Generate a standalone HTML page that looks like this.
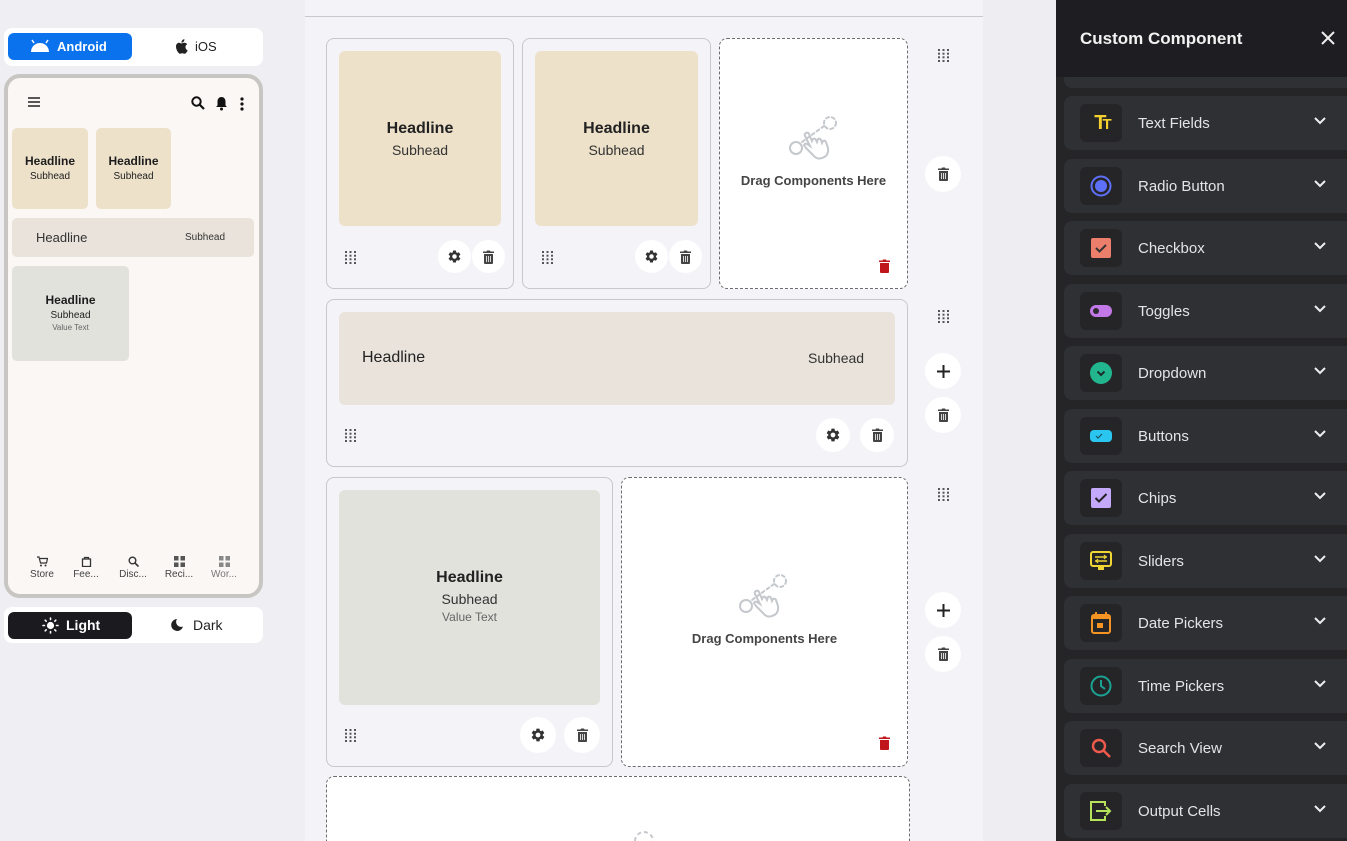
<!DOCTYPE html>
<html style="width:1347px;height:841px;overflow:hidden"><head><meta charset="utf-8">
<style>
*{margin:0;padding:0;box-sizing:border-box}
body{width:1347px;height:841px;overflow:hidden;position:relative;background:#efeef2;font-family:"Liberation Sans",sans-serif;color:#1d1d1d}
.a{position:absolute}
.c{text-align:center}
.dots{position:absolute;width:11px;height:13px}
.circ{position:absolute;width:34px;height:34px;border-radius:50%;background:#fff;display:flex;align-items:center;justify-content:center}
.card{position:absolute;border:1px solid #c6c8d0;border-radius:8px;background:#f4f3f8}
.drop{position:absolute;border:1px dashed #6b6b70;border-radius:8px;background:#fff}
.item{position:absolute;left:1064px;width:283px;height:54px;background:#2f3034;border-radius:8px 0 0 8px}
.ib{position:absolute;left:16px;top:8px;width:42px;height:38px;background:#252528;border-radius:6px;display:flex;align-items:center;justify-content:center}
.lbl{position:absolute;left:74px;top:19px;font-size:15px;color:#e4e4e6}
.chev{position:absolute;left:250px;top:21px}
</style></head><body>

<div class="a" style="left:305px;top:0;width:678px;height:841px;background:#f4f3f8"></div>
<div class="a" style="left:305px;top:16px;width:678px;height:1px;background:#c9c9ce"></div>
<div class="a" style="left:983px;top:0;width:73px;height:841px;background:#eeedf1"></div>

<div class="a" style="left:4px;top:28px;width:259px;height:38px;background:#fff;border-radius:8px"></div>
<div class="a" style="left:8px;top:33px;width:124px;height:27px;background:#0a72ec;border-radius:6px;color:#fff;font-weight:bold;font-size:13px;line-height:27px;padding-left:49px">Android</div>
<svg class="a" style="left:30px;top:39px" width="20" height="14" viewBox="0 0 20 14"><path d="M1 13 A9 9 0 0 1 19 13 Z" fill="#fff"/><path d="M4 4 L2 1 M16 4 L18 1" stroke="#fff" stroke-width="1.5"/></svg>
<svg class="a" style="left:175px;top:39px" width="13" height="15" viewBox="0 0 13 15"><path d="M10.5 8c0-2 1.6-2.7 1.7-2.8-1-1.4-2.4-1.5-2.9-1.5-1.2-.1-2.3.7-2.9.7s-1.5-.7-2.5-.7C2.6 3.8 1 5 1 7.5c0 3.5 2.7 7.3 4 7.3.8 0 1.3-.5 2.3-.5s1.3.5 2.3.5c1.6 0 3-3.3 3.1-3.4-.1 0-2.2-.9-2.2-3.4zM8.6 2.6C9.2 1.9 9.5 1 9.4.1 8.6.2 7.8.6 7.3 1.3 6.8 1.9 6.4 2.7 6.5 3.6c.8.1 1.6-.4 2.1-1z" fill="#222"/></svg>
<div class="a" style="left:195px;top:39px;font-size:13px;color:#222">iOS</div>

<div class="a" style="left:4px;top:74px;width:259px;height:524px;border:4px solid #c8c6c2;border-radius:16px;background:#faf7f4"></div>
<svg class="a" style="left:28px;top:97px" width="12" height="10"><path d="M0 1h12M0 5h12M0 9h12" stroke="#222" stroke-width="1.6"/></svg>
<svg class="a" style="left:191px;top:96px" width="14" height="14" viewBox="0 0 14 14"><circle cx="5.5" cy="5.5" r="4.2" fill="none" stroke="#111" stroke-width="2"/><path d="M8.5 8.5L13 13" stroke="#111" stroke-width="2.2"/></svg>
<svg class="a" style="left:215px;top:96px" width="13" height="15" viewBox="0 0 13 15"><path d="M6.5 1C4 1 2.5 3 2.5 5.5v4L1 11h11l-1.5-1.5v-4C10.5 3 9 1 6.5 1z" fill="#111"/><circle cx="6.5" cy="13" r="1.5" fill="#111"/></svg>
<svg class="a" style="left:240px;top:97px" width="4" height="14"><circle cx="2" cy="2" r="1.6" fill="#111"/><circle cx="2" cy="7" r="1.6" fill="#111"/><circle cx="2" cy="12" r="1.6" fill="#111"/></svg>

<div class="a c" style="left:12px;top:128px;width:76px;height:81px;background:#ede1ca;border-radius:5px;padding-top:26px"><div style="font-weight:bold;font-size:12px">Headline</div><div style="font-size:10px;margin-top:3px">Subhead</div></div>
<div class="a c" style="left:96px;top:128px;width:75px;height:81px;background:#ede1ca;border-radius:5px;padding-top:26px"><div style="font-weight:bold;font-size:12px">Headline</div><div style="font-size:10px;margin-top:3px">Subhead</div></div>
<div class="a" style="left:12px;top:218px;width:242px;height:39px;background:#e9e3db;border-radius:5px"></div>
<div class="a" style="left:36px;top:230px;font-size:13px;color:#333">Headline</div>
<div class="a" style="left:185px;top:232px;font-size:10px;color:#333">Subhead</div>
<div class="a c" style="left:12px;top:266px;width:117px;height:95px;background:#e1e2dc;border-radius:5px;padding-top:27px"><div style="font-weight:bold;font-size:12px">Headline</div><div style="font-size:10px;margin-top:3px">Subhead</div><div style="font-size:8px;color:#666;margin-top:2px">Value Text</div></div>

<div class="a c" style="left:24px;top:556px;width:36px;font-size:10px;color:#444">
<svg width="11" height="11" viewBox="0 0 11 11"><path d="M0 1h2l1.5 6h6l1-4.5H3" fill="none" stroke="#333" stroke-width="1.2"/><circle cx="4" cy="9.5" r="1" fill="#333"/><circle cx="8.5" cy="9.5" r="1" fill="#333"/></svg><div style="margin-top:-1px">Store</div></div>
<div class="a c" style="left:68px;top:556px;width:36px;font-size:10px;color:#444">
<svg width="11" height="11" viewBox="0 0 11 11"><rect x="1.5" y="3" width="8" height="7.5" fill="none" stroke="#333" stroke-width="1.3"/><path d="M3.5 3V1.5h4V3" fill="none" stroke="#333" stroke-width="1.2"/></svg><div style="margin-top:-1px">Fee...</div></div>
<div class="a c" style="left:115px;top:556px;width:36px;font-size:10px;color:#444">
<svg width="11" height="11" viewBox="0 0 11 11"><circle cx="4.5" cy="4.5" r="3.3" fill="none" stroke="#333" stroke-width="1.4"/><path d="M7 7l3.5 3.5" stroke="#333" stroke-width="1.6"/></svg><div style="margin-top:-1px">Disc...</div></div>
<div class="a c" style="left:161px;top:556px;width:36px;font-size:10px;color:#444">
<svg width="11" height="11" viewBox="0 0 11 11"><rect x="0" y="0" width="4.5" height="4.5" fill="#555"/><rect x="6.5" y="0" width="4.5" height="4.5" fill="#555"/><rect x="0" y="6.5" width="4.5" height="4.5" fill="#555"/><rect x="6.5" y="6.5" width="4.5" height="4.5" fill="#555"/></svg><div style="margin-top:-1px">Reci...</div></div>
<div class="a c" style="left:206px;top:556px;width:36px;font-size:10px;color:#777">
<svg width="11" height="11" viewBox="0 0 11 11"><rect x="0" y="0" width="4.5" height="4.5" fill="#888"/><rect x="6.5" y="0" width="4.5" height="4.5" fill="#888"/><rect x="0" y="6.5" width="4.5" height="4.5" fill="#888"/><rect x="6.5" y="6.5" width="4.5" height="4.5" fill="#888"/></svg><div style="margin-top:-1px">Wor...</div></div>

<div class="a" style="left:4px;top:607px;width:259px;height:36px;background:#fff;border-radius:8px"></div>
<div class="a" style="left:8px;top:612px;width:124px;height:27px;background:#1b1b1f;border-radius:6px;color:#fff;font-weight:bold;font-size:14px;line-height:27px;padding-left:58px">Light</div>
<svg class="a" style="left:42px;top:617px" width="17" height="17" viewBox="0 0 17 17"><circle cx="8.5" cy="8.5" r="3.6" fill="#fff"/><g stroke="#fff" stroke-width="1.6" stroke-linecap="round"><path d="M8.5 1v1.5M8.5 14.5V16M1 8.5h1.5M14.5 8.5H16M3.2 3.2l1 1M12.8 12.8l1 1M3.2 13.8l1-1M12.8 4.2l1-1"/></g></svg>
<svg class="a" style="left:170px;top:618px" width="14" height="14" viewBox="0 0 14 14"><path d="M7 1a6 6 0 1 0 6 7.5A5 5 0 0 1 7 1z" fill="#222"/></svg>
<div class="a" style="left:193px;top:617px;font-size:14px;color:#222">Dark</div>

<div class="card" style="left:326px;top:38px;width:188px;height:251px"></div>
<div class="a c" style="left:339px;top:51px;width:162px;height:175px;background:#ede1ca;border-radius:6px;padding-top:69px"><div style="font-weight:bold;font-size:16px;color:#222">Headline</div><div style="font-size:14px;margin-top:4px;color:#333">Subhead</div></div>
<div class="card" style="left:522px;top:38px;width:189px;height:251px"></div>
<div class="a c" style="left:535px;top:51px;width:163px;height:175px;background:#ede1ca;border-radius:6px;padding-top:69px"><div style="font-weight:bold;font-size:16px;color:#222">Headline</div><div style="font-size:14px;margin-top:4px;color:#333">Subhead</div></div>
<div class="drop" style="left:719px;top:38px;width:189px;height:251px"></div>
<div class="a c" style="left:719px;top:173px;width:189px;font-size:13px;font-weight:bold;color:#444">Drag Components Here</div>

<div class="card" style="left:326px;top:299px;width:582px;height:168px"></div>
<div class="a" style="left:339px;top:312px;width:556px;height:93px;background:#e9e3db;border-radius:6px"></div>
<div class="a" style="left:362px;top:349px;font-size:16px;color:#222">Headline</div>
<div class="a" style="left:808px;top:350px;font-size:14px;color:#333">Subhead</div>

<div class="card" style="left:326px;top:477px;width:287px;height:290px"></div>
<div class="a c" style="left:339px;top:490px;width:261px;height:215px;background:#e1e2dc;border-radius:6px;padding-top:79px"><div style="font-weight:bold;font-size:16px;color:#222">Headline</div><div style="font-size:14px;margin-top:4px;color:#333">Subhead</div><div style="font-size:12px;margin-top:3px;color:#666">Value Text</div></div>
<div class="drop" style="left:621px;top:477px;width:287px;height:290px"></div>
<div class="a c" style="left:621px;top:631px;width:287px;font-size:13px;font-weight:bold;color:#444">Drag Components Here</div>

<div class="drop" style="left:326px;top:776px;width:584px;height:65px;border-bottom:none;border-radius:8px 8px 0 0"></div>
<svg class="a" style="left:632px;top:829px" width="24" height="12"><path d="M3 12 A9 9 0 0 1 21 12" fill="none" stroke="#c5c8cc" stroke-width="2" stroke-dasharray="4 3"/></svg>

<svg class="a" style="left:786px;top:112px" width="56" height="52" viewBox="0 0 56 52"><g fill="none" stroke="#c5c8cc" stroke-width="2" stroke-linecap="round"><circle cx="44" cy="11" r="6" stroke-dasharray="3 3"/><path d="M38 14 L16 30" stroke-dasharray="3 3"/><circle cx="10" cy="36" r="6"/><path d="M20 36 L27 43 Q31 48 36 46 Q43 44 42 36 L40 30 Q39 28 37 29 L36 31 L35 28 Q34 26 32 27 L31 30 L30 28 Q29 26 27 27 L26 29 L23 22 Q22 20 20 21 Q18 22 19 24 L24 34 L21 32 Q19 31 18 33 Z"/></g></svg>
<svg class="a" style="left:736px;top:570px" width="56" height="52" viewBox="0 0 56 52"><g fill="none" stroke="#c5c8cc" stroke-width="2" stroke-linecap="round"><circle cx="44" cy="11" r="6" stroke-dasharray="3 3"/><path d="M38 14 L16 30" stroke-dasharray="3 3"/><circle cx="10" cy="36" r="6"/><path d="M20 36 L27 43 Q31 48 36 46 Q43 44 42 36 L40 30 Q39 28 37 29 L36 31 L35 28 Q34 26 32 27 L31 30 L30 28 Q29 26 27 27 L26 29 L23 22 Q22 20 20 21 Q18 22 19 24 L24 34 L21 32 Q19 31 18 33 Z"/></g></svg>

<svg class="a" style="left:879px;top:259px" width="11" height="14" viewBox="0 0 11 14"><path d="M1 4h9v9a1 1 0 0 1-1 1H2a1 1 0 0 1-1-1zM0 1.5h3.5L4 .5h3l.5 1H11V3H0z" fill="#c0161b"/></svg>
<svg class="a" style="left:879px;top:736px" width="11" height="14" viewBox="0 0 11 14"><path d="M1 4h9v9a1 1 0 0 1-1 1H2a1 1 0 0 1-1-1zM0 1.5h3.5L4 .5h3l.5 1H11V3H0z" fill="#c0161b"/></svg>

<svg class="dots" style="left:345px;top:251px" viewBox="0 0 11 13"><g fill="#555"><rect x="0" y="0" width="2" height="2"/><rect x="4.5" y="0" width="2" height="2"/><rect x="9" y="0" width="2" height="2"/><rect x="0" y="3.7" width="2" height="2"/><rect x="4.5" y="3.7" width="2" height="2"/><rect x="9" y="3.7" width="2" height="2"/><rect x="0" y="7.3" width="2" height="2"/><rect x="4.5" y="7.3" width="2" height="2"/><rect x="9" y="7.3" width="2" height="2"/><rect x="0" y="11" width="2" height="2"/><rect x="4.5" y="11" width="2" height="2"/><rect x="9" y="11" width="2" height="2"/></g></svg>
<svg class="dots" style="left:542px;top:251px" viewBox="0 0 11 13"><g fill="#555"><rect x="0" y="0" width="2" height="2"/><rect x="4.5" y="0" width="2" height="2"/><rect x="9" y="0" width="2" height="2"/><rect x="0" y="3.7" width="2" height="2"/><rect x="4.5" y="3.7" width="2" height="2"/><rect x="9" y="3.7" width="2" height="2"/><rect x="0" y="7.3" width="2" height="2"/><rect x="4.5" y="7.3" width="2" height="2"/><rect x="9" y="7.3" width="2" height="2"/><rect x="0" y="11" width="2" height="2"/><rect x="4.5" y="11" width="2" height="2"/><rect x="9" y="11" width="2" height="2"/></g></svg>
<svg class="dots" style="left:345px;top:429px" viewBox="0 0 11 13"><g fill="#555"><rect x="0" y="0" width="2" height="2"/><rect x="4.5" y="0" width="2" height="2"/><rect x="9" y="0" width="2" height="2"/><rect x="0" y="3.7" width="2" height="2"/><rect x="4.5" y="3.7" width="2" height="2"/><rect x="9" y="3.7" width="2" height="2"/><rect x="0" y="7.3" width="2" height="2"/><rect x="4.5" y="7.3" width="2" height="2"/><rect x="9" y="7.3" width="2" height="2"/><rect x="0" y="11" width="2" height="2"/><rect x="4.5" y="11" width="2" height="2"/><rect x="9" y="11" width="2" height="2"/></g></svg>
<svg class="dots" style="left:345px;top:729px" viewBox="0 0 11 13"><g fill="#555"><rect x="0" y="0" width="2" height="2"/><rect x="4.5" y="0" width="2" height="2"/><rect x="9" y="0" width="2" height="2"/><rect x="0" y="3.7" width="2" height="2"/><rect x="4.5" y="3.7" width="2" height="2"/><rect x="9" y="3.7" width="2" height="2"/><rect x="0" y="7.3" width="2" height="2"/><rect x="4.5" y="7.3" width="2" height="2"/><rect x="9" y="7.3" width="2" height="2"/><rect x="0" y="11" width="2" height="2"/><rect x="4.5" y="11" width="2" height="2"/><rect x="9" y="11" width="2" height="2"/></g></svg>
<svg class="dots" style="left:938px;top:49px" viewBox="0 0 11 13"><g fill="#555"><rect x="0" y="0" width="2" height="2"/><rect x="4.5" y="0" width="2" height="2"/><rect x="9" y="0" width="2" height="2"/><rect x="0" y="3.7" width="2" height="2"/><rect x="4.5" y="3.7" width="2" height="2"/><rect x="9" y="3.7" width="2" height="2"/><rect x="0" y="7.3" width="2" height="2"/><rect x="4.5" y="7.3" width="2" height="2"/><rect x="9" y="7.3" width="2" height="2"/><rect x="0" y="11" width="2" height="2"/><rect x="4.5" y="11" width="2" height="2"/><rect x="9" y="11" width="2" height="2"/></g></svg>
<svg class="dots" style="left:938px;top:310px" viewBox="0 0 11 13"><g fill="#555"><rect x="0" y="0" width="2" height="2"/><rect x="4.5" y="0" width="2" height="2"/><rect x="9" y="0" width="2" height="2"/><rect x="0" y="3.7" width="2" height="2"/><rect x="4.5" y="3.7" width="2" height="2"/><rect x="9" y="3.7" width="2" height="2"/><rect x="0" y="7.3" width="2" height="2"/><rect x="4.5" y="7.3" width="2" height="2"/><rect x="9" y="7.3" width="2" height="2"/><rect x="0" y="11" width="2" height="2"/><rect x="4.5" y="11" width="2" height="2"/><rect x="9" y="11" width="2" height="2"/></g></svg>
<svg class="dots" style="left:938px;top:488px" viewBox="0 0 11 13"><g fill="#555"><rect x="0" y="0" width="2" height="2"/><rect x="4.5" y="0" width="2" height="2"/><rect x="9" y="0" width="2" height="2"/><rect x="0" y="3.7" width="2" height="2"/><rect x="4.5" y="3.7" width="2" height="2"/><rect x="9" y="3.7" width="2" height="2"/><rect x="0" y="7.3" width="2" height="2"/><rect x="4.5" y="7.3" width="2" height="2"/><rect x="9" y="7.3" width="2" height="2"/><rect x="0" y="11" width="2" height="2"/><rect x="4.5" y="11" width="2" height="2"/><rect x="9" y="11" width="2" height="2"/></g></svg>

<div class="circ" style="left:438px;top:240px;width:33px;height:33px"><svg width="15" height="15" viewBox="0 0 24 24"><path fill="#333" d="M19.14 12.94c.04-.3.06-.61.06-.94 0-.32-.02-.64-.07-.94l2.03-1.58a.49.49 0 0 0 .12-.61l-1.92-3.32a.49.49 0 0 0-.59-.22l-2.39.96c-.5-.38-1.03-.7-1.62-.94l-.36-2.54a.48.48 0 0 0-.48-.41h-3.84c-.24 0-.43.17-.47.41l-.36 2.54c-.59.24-1.13.57-1.62.94l-2.39-.96a.49.49 0 0 0-.59.22L2.74 8.87c-.12.21-.08.47.12.61l2.03 1.58c-.05.3-.09.63-.09.94s.02.64.07.94l-2.03 1.58a.49.49 0 0 0-.12.61l1.92 3.32c.12.22.37.29.59.22l2.39-.96c.5.38 1.03.7 1.62.94l.36 2.54c.05.24.24.41.48.41h3.84c.24 0 .44-.17.47-.41l.36-2.54c.59-.24 1.13-.56 1.62-.94l2.39.96c.22.08.47 0 .59-.22l1.92-3.32c.12-.22.07-.47-.12-.61l-2.01-1.58zM12 15.6a3.6 3.6 0 1 1 0-7.2 3.6 3.6 0 0 1 0 7.2z"/></svg></div>
<div class="circ" style="left:635px;top:240px;width:33px;height:33px"><svg width="15" height="15" viewBox="0 0 24 24"><path fill="#333" d="M19.14 12.94c.04-.3.06-.61.06-.94 0-.32-.02-.64-.07-.94l2.03-1.58a.49.49 0 0 0 .12-.61l-1.92-3.32a.49.49 0 0 0-.59-.22l-2.39.96c-.5-.38-1.03-.7-1.62-.94l-.36-2.54a.48.48 0 0 0-.48-.41h-3.84c-.24 0-.43.17-.47.41l-.36 2.54c-.59.24-1.13.57-1.62.94l-2.39-.96a.49.49 0 0 0-.59.22L2.74 8.87c-.12.21-.08.47.12.61l2.03 1.58c-.05.3-.09.63-.09.94s.02.64.07.94l-2.03 1.58a.49.49 0 0 0-.12.61l1.92 3.32c.12.22.37.29.59.22l2.39-.96c.5.38 1.03.7 1.62.94l.36 2.54c.05.24.24.41.48.41h3.84c.24 0 .44-.17.47-.41l.36-2.54c.59-.24 1.13-.56 1.62-.94l2.39.96c.22.08.47 0 .59-.22l1.92-3.32c.12-.22.07-.47-.12-.61l-2.01-1.58zM12 15.6a3.6 3.6 0 1 1 0-7.2 3.6 3.6 0 0 1 0 7.2z"/></svg></div>
<div class="circ" style="left:816px;top:418px"><svg width="16" height="16" viewBox="0 0 24 24"><path fill="#333" d="M19.14 12.94c.04-.3.06-.61.06-.94 0-.32-.02-.64-.07-.94l2.03-1.58a.49.49 0 0 0 .12-.61l-1.92-3.32a.49.49 0 0 0-.59-.22l-2.39.96c-.5-.38-1.03-.7-1.62-.94l-.36-2.54a.48.48 0 0 0-.48-.41h-3.84c-.24 0-.43.17-.47.41l-.36 2.54c-.59.24-1.13.57-1.62.94l-2.39-.96a.49.49 0 0 0-.59.22L2.74 8.87c-.12.21-.08.47.12.61l2.03 1.58c-.05.3-.09.63-.09.94s.02.64.07.94l-2.03 1.58a.49.49 0 0 0-.12.61l1.92 3.32c.12.22.37.29.59.22l2.39-.96c.5.38 1.03.7 1.62.94l.36 2.54c.05.24.24.41.48.41h3.84c.24 0 .44-.17.47-.41l.36-2.54c.59-.24 1.13-.56 1.62-.94l2.39.96c.22.08.47 0 .59-.22l1.92-3.32c.12-.22.07-.47-.12-.61l-2.01-1.58zM12 15.6a3.6 3.6 0 1 1 0-7.2 3.6 3.6 0 0 1 0 7.2z"/></svg></div>
<div class="circ" style="left:520px;top:717px;width:36px;height:36px"><svg width="16" height="16" viewBox="0 0 24 24"><path fill="#333" d="M19.14 12.94c.04-.3.06-.61.06-.94 0-.32-.02-.64-.07-.94l2.03-1.58a.49.49 0 0 0 .12-.61l-1.92-3.32a.49.49 0 0 0-.59-.22l-2.39.96c-.5-.38-1.03-.7-1.62-.94l-.36-2.54a.48.48 0 0 0-.48-.41h-3.84c-.24 0-.43.17-.47.41l-.36 2.54c-.59.24-1.13.57-1.62.94l-2.39-.96a.49.49 0 0 0-.59.22L2.74 8.87c-.12.21-.08.47.12.61l2.03 1.58c-.05.3-.09.63-.09.94s.02.64.07.94l-2.03 1.58a.49.49 0 0 0-.12.61l1.92 3.32c.12.22.37.29.59.22l2.39-.96c.5.38 1.03.7 1.62.94l.36 2.54c.05.24.24.41.48.41h3.84c.24 0 .44-.17.47-.41l.36-2.54c.59-.24 1.13-.56 1.62-.94l2.39.96c.22.08.47 0 .59-.22l1.92-3.32c.12-.22.07-.47-.12-.61l-2.01-1.58zM12 15.6a3.6 3.6 0 1 1 0-7.2 3.6 3.6 0 0 1 0 7.2z"/></svg></div>

<div class="circ" style="left:472px;top:240px;width:33px;height:33px"><svg width="11" height="14" viewBox="0 0 11 14"><path d="M1 4h9v9a1 1 0 0 1-1 1H2a1 1 0 0 1-1-1zM0 1.5h3.5L4 .5h3l.5 1H11V3H0z" fill="#444"/><path d="M3.5 6v6M5.5 6v6M7.5 6v6" stroke="#fff" stroke-width=".8"/></svg></div>
<div class="circ" style="left:669px;top:240px;width:33px;height:33px"><svg width="11" height="14" viewBox="0 0 11 14"><path d="M1 4h9v9a1 1 0 0 1-1 1H2a1 1 0 0 1-1-1zM0 1.5h3.5L4 .5h3l.5 1H11V3H0z" fill="#444"/><path d="M3.5 6v6M5.5 6v6M7.5 6v6" stroke="#fff" stroke-width=".8"/></svg></div>
<div class="circ" style="left:860px;top:418px"><svg width="11" height="14" viewBox="0 0 11 14"><path d="M1 4h9v9a1 1 0 0 1-1 1H2a1 1 0 0 1-1-1zM0 1.5h3.5L4 .5h3l.5 1H11V3H0z" fill="#444"/><path d="M3.5 6v6M5.5 6v6M7.5 6v6" stroke="#fff" stroke-width=".8"/></svg></div>
<div class="circ" style="left:564px;top:717px;width:36px;height:36px"><svg width="11" height="14" viewBox="0 0 11 14"><path d="M1 4h9v9a1 1 0 0 1-1 1H2a1 1 0 0 1-1-1zM0 1.5h3.5L4 .5h3l.5 1H11V3H0z" fill="#444"/><path d="M3.5 6v6M5.5 6v6M7.5 6v6" stroke="#fff" stroke-width=".8"/></svg></div>
<div class="circ" style="left:925px;top:156px;width:36px;height:36px"><svg width="11" height="14" viewBox="0 0 11 14"><path d="M1 4h9v9a1 1 0 0 1-1 1H2a1 1 0 0 1-1-1zM0 1.5h3.5L4 .5h3l.5 1H11V3H0z" fill="#444"/><path d="M3.5 6v6M5.5 6v6M7.5 6v6" stroke="#fff" stroke-width=".8"/></svg></div>
<div class="circ" style="left:925px;top:397px;width:36px;height:36px"><svg width="11" height="14" viewBox="0 0 11 14"><path d="M1 4h9v9a1 1 0 0 1-1 1H2a1 1 0 0 1-1-1zM0 1.5h3.5L4 .5h3l.5 1H11V3H0z" fill="#444"/><path d="M3.5 6v6M5.5 6v6M7.5 6v6" stroke="#fff" stroke-width=".8"/></svg></div>
<div class="circ" style="left:925px;top:636px;width:36px;height:36px"><svg width="11" height="14" viewBox="0 0 11 14"><path d="M1 4h9v9a1 1 0 0 1-1 1H2a1 1 0 0 1-1-1zM0 1.5h3.5L4 .5h3l.5 1H11V3H0z" fill="#444"/><path d="M3.5 6v6M5.5 6v6M7.5 6v6" stroke="#fff" stroke-width=".8"/></svg></div>
<div class="circ" style="left:925px;top:353px;width:36px;height:36px"><svg width="13" height="13"><path d="M6.5 0v13M0 6.5h13" stroke="#222" stroke-width="2"/></svg></div>
<div class="circ" style="left:925px;top:592px;width:36px;height:36px"><svg width="13" height="13"><path d="M6.5 0v13M0 6.5h13" stroke="#222" stroke-width="2"/></svg></div>

<div class="a" style="left:1056px;top:0;width:291px;height:841px;background:#252528"></div>
<div class="a" style="left:1064px;top:70px;width:283px;height:18px;background:#2f3034;border-radius:8px 0 0 8px"></div>
<div class="a" style="left:1056px;top:0;width:291px;height:77px;background:#1e1e22"></div>
<div class="a" style="left:1080px;top:29px;font-size:17px;font-weight:bold;color:#f2f2f2">Custom Component</div>
<svg class="a" style="left:1321px;top:31px" width="14" height="14"><path d="M1 1l12 12M13 1L1 13" stroke="#eee" stroke-width="2"/></svg>

<div class="item" style="top:96px"><div class="ib"><span style="color:#f5cf2e;font-weight:bold;font-size:20px;letter-spacing:-4px">T<span style="font-size:15px">T</span></span></div><div class="lbl">Text Fields</div><svg class="chev" width="12" height="8"><path d="M1 1l5 5 5-5" fill="none" stroke="#eee" stroke-width="2"/></svg></div>
<div class="item" style="top:159px"><div class="ib"><svg width="22" height="22"><circle cx="11" cy="11" r="9.5" fill="none" stroke="#5d70f6" stroke-width="2"/><circle cx="11" cy="11" r="6" fill="#5d70f6"/></svg></div><div class="lbl">Radio Button</div><svg class="chev" width="12" height="8"><path d="M1 1l5 5 5-5" fill="none" stroke="#eee" stroke-width="2"/></svg></div>
<div class="item" style="top:221px"><div class="ib"><svg width="20" height="20"><rect width="20" height="20" rx="2" fill="#ec7f6b"/><path d="M5 10l3.5 3.5L15 7" fill="none" stroke="#333" stroke-width="2"/></svg></div><div class="lbl">Checkbox</div><svg class="chev" width="12" height="8"><path d="M1 1l5 5 5-5" fill="none" stroke="#eee" stroke-width="2"/></svg></div>
<div class="item" style="top:284px"><div class="ib"><svg width="22" height="12"><rect width="22" height="12" rx="6" fill="#c278e6"/><circle cx="6" cy="6" r="3" fill="#2b2b2e"/></svg></div><div class="lbl">Toggles</div><svg class="chev" width="12" height="8"><path d="M1 1l5 5 5-5" fill="none" stroke="#eee" stroke-width="2"/></svg></div>
<div class="item" style="top:346px"><div class="ib"><svg width="22" height="22"><circle cx="11" cy="11" r="11" fill="#21b68e"/><path d="M7.5 9.5l3.5 3.5 3.5-3.5" fill="none" stroke="#1d2b2a" stroke-width="2"/></svg></div><div class="lbl">Dropdown</div><svg class="chev" width="12" height="8"><path d="M1 1l5 5 5-5" fill="none" stroke="#eee" stroke-width="2"/></svg></div>
<div class="item" style="top:409px"><div class="ib"><svg width="22" height="12"><rect width="22" height="12" rx="4" fill="#2bc6f0"/><path d="M6 6l2 2 4-4" fill="none" stroke="#1c4f5e" stroke-width="1.2"/></svg></div><div class="lbl">Buttons</div><svg class="chev" width="12" height="8"><path d="M1 1l5 5 5-5" fill="none" stroke="#eee" stroke-width="2"/></svg></div>
<div class="item" style="top:471px"><div class="ib"><svg width="20" height="20"><rect width="20" height="20" rx="2" fill="#c4a9fa"/><path d="M4.5 10l3.5 3.5L15.5 6" fill="none" stroke="#222" stroke-width="2"/></svg></div><div class="lbl">Chips</div><svg class="chev" width="12" height="8"><path d="M1 1l5 5 5-5" fill="none" stroke="#eee" stroke-width="2"/></svg></div>
<div class="item" style="top:534px"><div class="ib"><svg width="22" height="20"><rect x="1" y="1" width="20" height="14" rx="2" fill="none" stroke="#f0d533" stroke-width="2"/><rect x="8" y="15" width="6" height="4" fill="#f0d533"/><path d="M5 6h12M5 10h12" stroke="#f0d533" stroke-width="1.6"/><path d="M14 4l2 2-2 2M8 8l-2 2 2 2" fill="none" stroke="#f0d533" stroke-width="1.2"/></svg></div><div class="lbl">Sliders</div><svg class="chev" width="12" height="8"><path d="M1 1l5 5 5-5" fill="none" stroke="#eee" stroke-width="2"/></svg></div>
<div class="item" style="top:596px"><div class="ib"><svg width="20" height="22"><rect x="1" y="3" width="18" height="18" rx="2" fill="none" stroke="#f59422" stroke-width="2"/><rect x="1" y="3" width="18" height="4" fill="#f59422"/><path d="M5 0v4M15 0v4" stroke="#f59422" stroke-width="2"/><rect x="6" y="11" width="6" height="5" fill="#f59422"/></svg></div><div class="lbl">Date Pickers</div><svg class="chev" width="12" height="8"><path d="M1 1l5 5 5-5" fill="none" stroke="#eee" stroke-width="2"/></svg></div>
<div class="item" style="top:659px"><div class="ib"><svg width="22" height="22"><circle cx="11" cy="11" r="9.5" fill="none" stroke="#1aa393" stroke-width="2"/><path d="M11 5v6l4 3" fill="none" stroke="#1aa393" stroke-width="2"/></svg></div><div class="lbl">Time Pickers</div><svg class="chev" width="12" height="8"><path d="M1 1l5 5 5-5" fill="none" stroke="#eee" stroke-width="2"/></svg></div>
<div class="item" style="top:721px"><div class="ib"><svg width="20" height="20"><circle cx="8" cy="8" r="6" fill="none" stroke="#ef5a4d" stroke-width="2.4"/><path d="M12.5 12.5L19 19" stroke="#ef5a4d" stroke-width="2.6"/></svg></div><div class="lbl">Search View</div><svg class="chev" width="12" height="8"><path d="M1 1l5 5 5-5" fill="none" stroke="#eee" stroke-width="2"/></svg></div>
<div class="item" style="top:784px"><div class="ib"><svg width="22" height="20"><path d="M15 5V1H1v18h14v-4" fill="none" stroke="#b6e35a" stroke-width="2"/><path d="M6 10h14M16 6l4 4-4 4" fill="none" stroke="#b6e35a" stroke-width="2"/></svg></div><div class="lbl">Output Cells</div><svg class="chev" width="12" height="8"><path d="M1 1l5 5 5-5" fill="none" stroke="#eee" stroke-width="2"/></svg></div>

</body></html>
